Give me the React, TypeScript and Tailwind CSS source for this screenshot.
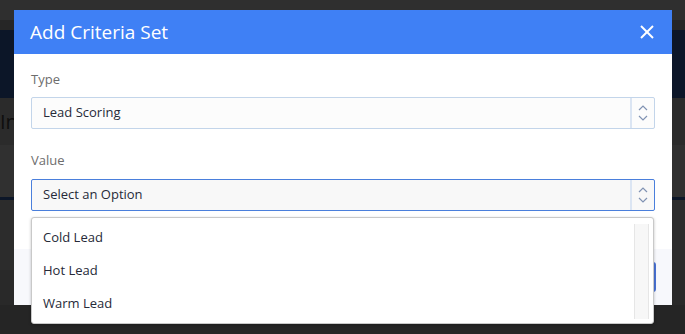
import React from 'react';

const font = { fontFamily: '"Open Sans", "Noto Sans", sans-serif' };

function Chevrons() {
  return (
    <svg width="10" height="18" viewBox="0 0 10 18" fill="none" stroke="#8193b3" strokeWidth="1.2">
      <polyline points="1,6 5,2 9,6" />
      <polyline points="1,12 5,16 9,12" />
    </svg>
  );
}

function SelectBox({ value, focused }: { value: string; focused?: boolean }) {
  return (
    <div
      className={`flex h-[32px] w-full items-stretch rounded-[2px] border ${
        focused ? 'border-[#4a7fdc] bg-[#f8f8f8]' : 'border-[#c3d5ea] bg-[#fcfcfc]'
      }`}
    >
      <div className="flex flex-1 items-center pl-[11px] text-[13px] text-[#262a38]">{value}</div>
      <div className="flex w-[24px] items-center justify-center border-l-2 border-[#dbe5f3]">
        <Chevrons />
      </div>
    </div>
  );
}

export default function App() {
  const options = ['Cold Lead', 'Hot Lead', 'Warm Lead'];

  return (
    <div className="relative h-[334px] w-full overflow-hidden bg-[#252525]" style={font}>
      {/* dimmed page behind the dialog */}
      <div className="flex flex-col">
        <div className="h-[20px] bg-[#2f2f2f]" />
        <div className="h-[10px] bg-[#262626]" />
        <div className="h-[68px] bg-[#0c1628]" />
        <div className="flex h-[47px] items-center bg-[#2b2b2b] text-[20px] text-[#0e0e0e]">Int</div>
        <div className="h-[52px] bg-[#303030]" />
        <div className="h-[3px] bg-[#0c1628]" />
        <div className="h-[70px] bg-[#2c2c2c]" />
        <div className="h-[35px] bg-[#292929]" />
      </div>

      {/* dialog */}
      <div className="absolute left-[14px] top-[10px] w-[658px] bg-white">
        <div className="flex h-[44px] items-center justify-between bg-[#3f80f5] pl-[16px] pr-[18px]">
          <span className="text-[19px] text-white">Add Criteria Set</span>
          <svg width="14" height="14" viewBox="0 0 14 14" stroke="white" strokeWidth="2">
            <line x1="1" y1="1" x2="13" y2="13" />
            <line x1="13" y1="1" x2="1" y2="13" />
          </svg>
        </div>

        <div className="px-[17px] pb-[38px] pt-[16px]">
          <div className="mb-[9px] h-[18px] text-[13px] leading-[18px] text-[#6d6d6d]">Type</div>
          <SelectBox value="Lead Scoring" />

          <div className="mb-[10px] mt-[22px] h-[18px] text-[13px] leading-[18px] text-[#6d6d6d]">Value</div>
          <div className="relative">
            <SelectBox value="Select an Option" focused />
            <div className="absolute left-0 top-[38px] z-10 flex h-[107px] w-[623px] rounded-[3px] border border-[#c9c9c9] bg-white shadow-[0_1px_3px_rgba(0,0,0,0.25)]">
              <div className="flex flex-1 flex-col pt-[3px]">
                {options.map((o) => (
                  <div key={o} className="flex h-[33px] items-center pl-[11px] text-[13px] text-[#262a38]">
                    {o}
                  </div>
                ))}
              </div>
              <div className="mb-[4px] mr-[4px] mt-[6px] w-[15px] border-x border-[#e6e6e6] bg-[#f7f7f7]" />
            </div>
          </div>
        </div>

        <div className="flex h-[56px] items-center justify-end bg-[#f7f8fc] pr-[16px]">
          <div className="h-[30px] w-[90px] rounded-[3px] bg-[#4a73d6]" />
        </div>
      </div>
    </div>
  );
}
